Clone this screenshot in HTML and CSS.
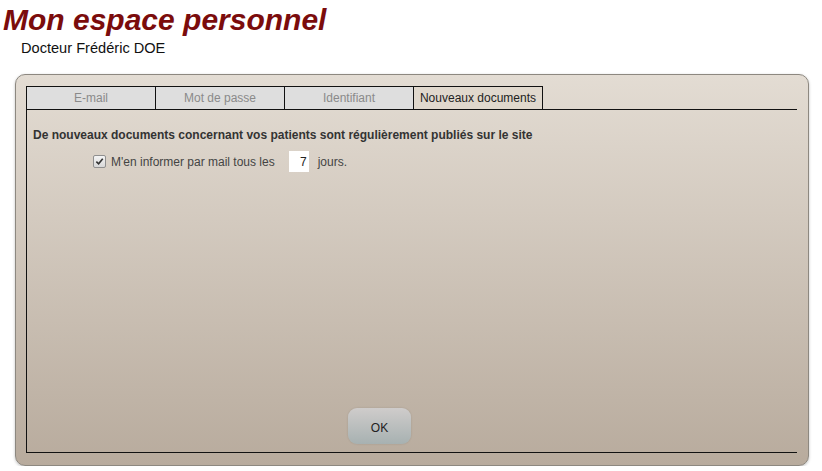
FILE: index.html
```html
<!DOCTYPE html>
<html lang="fr">
  <head>
    <meta charset="UTF-8" />
    <meta name="viewport" content="width=device-width, initial-scale=1.0" />
    <title>Mon espace personnel</title>
    <link rel="stylesheet" href="styles.css">
  </head>
  <body>
    <h1 class="page-title">Mon espace personnel</h1>
    <p class="user-name">Docteur Frédéric DOE</p>

    <section class="panel">
      <div class="tab-box">
        <ul class="tabs">
          <li class="tab">E-mail</li>
          <li class="tab">Mot de passe</li>
          <li class="tab">Identifiant</li>
          <li class="tab active">Nouveaux documents</li>
        </ul>
        <div class="tab-content">
          <p class="intro">De nouveaux documents concernant vos patients sont régulièrement publiés sur le site</p>
          <label class="notify">
            <span class="check">
              <svg viewBox="0 0 10 10" width="9" height="9">
                <path d="M1.5 5.2 L4 7.6 L8.6 2" fill="none" stroke="#333" stroke-width="1.8" />
              </svg>
            </span>
            <span>M'en informer par mail tous les</span>
            <input class="days" type="text" value="7" />
            <span>jours.</span>
          </label>
          <div class="actions">
            <button class="btn-ok">OK</button>
          </div>
        </div>
      </div>
    </section>
  </body>
</html>
```

FILE: styles.css
```css
body {
  margin: 0;
  padding: 0 13px 0 15px;
  background: #fff;
  font-family: "Liberation Sans", Arial, sans-serif;
  color: #222;
}

.page-title {
  margin: 0 0 0 -12px;
  padding-top: 3px;
  font-size: 30px;
  font-style: italic;
  font-weight: bold;
  color: #7b0c0c;
  line-height: 33px;
}

.user-name {
  margin: 4px 0 0 6px;
  font-size: 14.6px;
  line-height: 16px;
  color: #111;
}

.panel {
  margin-top: 18px;
  height: 392px;
  box-sizing: border-box;
  padding: 11px 11px 12px 10px;
  border: 1px solid #8d8880;
  border-radius: 10px;
  background: linear-gradient(#e3dcd3, #b8ab9d);
  box-shadow: 0 1px 3px rgba(0, 0, 0, 0.25);
  display: flex;
}

.tab-box {
  flex: 1;
  display: flex;
  flex-direction: column;
  border-left: 1px solid #111;
  border-bottom: 1px solid #111;
}

.tabs {
  list-style: none;
  margin: 0;
  padding: 0;
  display: flex;
  border-bottom: 1px solid #111;
}

.tab {
  width: 128px;
  height: 22px;
  line-height: 22px;
  text-align: center;
  font-size: 12px;
  color: #8a8a8a;
  background: #dedede;
  border: 1px solid #111;
  border-left: none;
  border-bottom: none;
}

.tab.active {
  background: #e0d8cd;
  color: #222;
}

.tab-content {
  flex: 1;
  display: flex;
  flex-direction: column;
  padding: 18px 0 0 6px;
}

.intro {
  margin: 0;
  font-size: 12px;
  font-weight: bold;
  color: #333;
  line-height: 14px;
}

.notify {
  display: flex;
  align-items: center;
  margin: 9px 0 0 60px;
  font-size: 12px;
  color: #444;
}

.check {
  width: 11px;
  height: 11px;
  margin: 0 5px 0 0;
  border: 1px solid #8f8f8f;
  border-radius: 2px;
  background: linear-gradient(#f4f4f4, #d8d8d8);
  display: flex;
  align-items: center;
  justify-content: center;
}

.days {
  width: 20px;
  height: 21px;
  box-sizing: border-box;
  margin: 0 9px 0 14px;
  padding: 0 2px;
  border: none;
  background: #fff;
  text-align: right;
  font-family: "Liberation Sans", Arial, sans-serif;
  font-size: 12px;
  color: #222;
}

.actions {
  margin-top: auto;
  display: flex;
  padding: 0 0 8px 315px;
}

.btn-ok {
  width: 63px;
  height: 36px;
  border: none;
  border-radius: 9px;
  background: linear-gradient(#cfcccb, #a7b1b1);
  box-shadow: 0 0 2px rgba(0, 0, 0, 0.15);
  font-family: "Liberation Sans", Arial, sans-serif;
  font-size: 12px;
  color: #222;
  padding-top: 4px;
}
```
